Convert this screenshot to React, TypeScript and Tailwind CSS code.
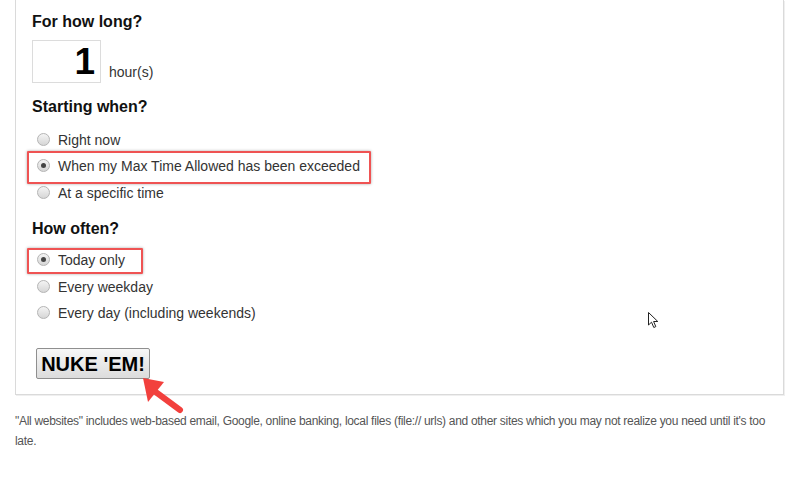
import * as React from "react";

/* ─── Radio dot ──────────────────────────────────────────────── */
function Radio({ checked }: { checked?: boolean }) {
  return (
    <span className="ml-[5px] mr-[8px] flex h-[13px] w-[13px] shrink-0 items-center justify-center rounded-full border border-[#b4b4b4] bg-gradient-to-b from-[#f4f4f4] to-[#d6d6d6]">
      {checked && <span className="h-[5px] w-[5px] rounded-full bg-[#444]" />}
    </span>
  );
}

interface Option {
  label: string;
  checked?: boolean;
  mark?: string; // class for the red annotation box
}

function OptionRow({ label, checked, mark }: Option) {
  return (
    <div className="relative flex h-[26.5px] items-center text-[14px] text-[#333]">
      <Radio checked={checked} />
      <span className="pt-[2px]">{label}</span>
      {mark && (
        <span
          className={`pointer-events-none absolute rounded-[1px] border-2 border-[#ef5353] shadow-[0_0_3px_rgba(0,0,0,0.35)] ${mark}`}
        />
      )}
    </div>
  );
}

const startOptions: Option[] = [
  { label: "Right now" },
  {
    label: "When my Max Time Allowed has been exceeded",
    checked: true,
    mark: "left-[-5px] top-[-2px] h-[33px] w-[344px]",
  },
  { label: "At a specific time" },
];

const oftenOptions: Option[] = [
  { label: "Today only", checked: true, mark: "left-[-5px] top-[1px] h-[26px] w-[116px]" },
  { label: "Every weekday" },
  { label: "Every day (including weekends)" },
];

function Heading({ children, className }: { children: React.ReactNode; className?: string }) {
  return <h3 className={`text-[16px] font-bold leading-[18px] text-[#111] ${className ?? ""}`}>{children}</h3>;
}

export default function App() {
  return (
    <div className="relative h-[483px] w-[800px] overflow-hidden bg-white font-['Liberation_Sans',Arial,sans-serif]">
      {/* Settings panel */}
      <div className="ml-[15px] w-[769px] border-x border-b border-[#dadada] px-4 pb-[15px] pt-[13px] shadow-[1px_1px_0_#efefef]">
        <Heading>For how long?</Heading>
        <div className="mt-[9px] flex items-end">
          <div className="flex h-[43px] w-[69px] items-center justify-end border border-[#dcdcdc] pr-[5px] text-[37px] font-bold leading-none text-black">
            1
          </div>
          <span className="ml-2 pb-[3px] text-[14px] leading-4 text-[#333]">hour(s)</span>
        </div>

        <Heading className="mt-[15px]">Starting when?</Heading>
        <div className="mt-[10px]">
          {startOptions.map((o) => (
            <OptionRow key={o.label} {...o} />
          ))}
        </div>

        <Heading className="mt-[14px]">How often?</Heading>
        <div className="mt-[9px]">
          {oftenOptions.map((o) => (
            <OptionRow key={o.label} {...o} />
          ))}
        </div>

        <button
          type="button"
          className="ml-1 mt-[22px] flex h-[31px] w-[114px] items-center justify-center rounded-[2px] border border-[#8f8f8f] bg-gradient-to-b from-[#f7f7f7] to-[#dcdcdc] text-[20px] font-bold leading-none text-black"
        >
          NUKE 'EM!
        </button>
      </div>

      {/* Footnote */}
      <p className="ml-[15px] mt-4 w-[769px] text-[12px] leading-[20px] tracking-[-0.3px] text-[#555]">
        "All websites" includes web-based email, Google, online banking, local files (file:// urls) and other sites
        which you may not realize you need until it's too late.
      </p>

      {/* Red annotation arrow */}
      <svg className="absolute left-[135px] top-[372px]" width="55" height="45" viewBox="0 0 55 45">
        <line x1="18" y1="18" x2="45" y2="38" stroke="#f2403d" strokeWidth="6" strokeLinecap="round" />
        <polygon points="8,6 29,10 13,30" fill="#f2403d" />
      </svg>

      {/* Mouse pointer */}
      <svg className="absolute left-[648px] top-[312px]" width="12" height="17" viewBox="0 0 12 17">
        <path
          d="M0.5 0.5 L0.5 13 L3.5 10.2 L5.8 15.5 L7.8 14.6 L5.6 9.5 L9.8 9.5 Z"
          fill="#fff"
          stroke="#222"
          strokeWidth="1"
          strokeLinejoin="round"
        />
      </svg>
    </div>
  );
}
